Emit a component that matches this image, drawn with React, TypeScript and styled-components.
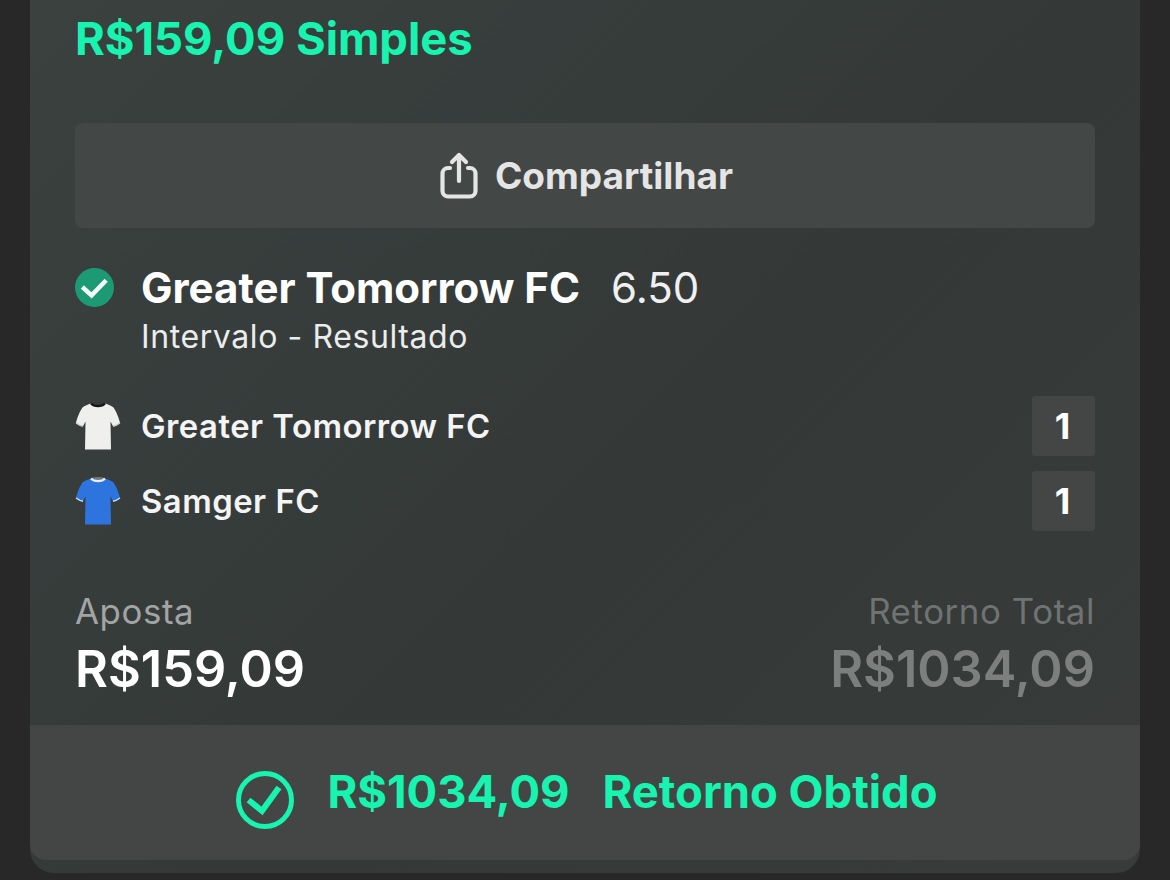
import styled, { createGlobalStyle } from 'styled-components';

const GlobalStyle = createGlobalStyle`
  html, body {
    margin: 0;
    padding: 0;
    height: 880px;
    overflow: hidden;
    background: #282828;
    font-family: Inter, 'Liberation Sans', sans-serif;
  }
`;

const teams = [
  { name: 'Greater Tomorrow FC', score: 1, body: '#efefee', collar: '#161616', neck: '#3a3a3a', trim: '#c9c9c9' },
  { name: 'Samger FC', score: 1, body: '#2d74de', collar: '#e6eef8', neck: '#6d7680', trim: '#cfe0f7' },
];

function Shirt({ body, collar, neck, trim }: { body: string; collar: string; neck: string; trim: string }) {
  return (
    <ShirtIcon viewBox="0 0 46 50" aria-hidden="true">
      <path d="M16 2 C19 0.5 27 0.5 30 2 L29 6 L17 6 Z" fill={neck} />
      <path
        d="M16 2.5 C19 6 27 6 30 2.5 C33 3.5 36.5 4.5 38.5 6.5 C41 10 44 17 45 22 C43 23.5 40.5 24.8 38 25.3 L35.5 20.5 L36 48.5 L10 48.5 L10.5 20.5 L8 25.3 C5.5 24.8 3 23.5 1 22 C2 17 5 10 7.5 6.5 C9.5 4.5 13 3.5 16 2.5 Z"
        fill={body}
      />
      <path d="M16 2.5 C19 6 27 6 30 2.5" fill="none" stroke={collar} strokeWidth="2.2" />
      <path d="M1 22 C3 23.5 5.5 24.8 8 25.3 M45 22 C43 23.5 40.5 24.8 38 25.3" fill="none" stroke={trim} strokeWidth="1.4" />
    </ShirtIcon>
  );
}

export default function App() {
  return (
    <>
      <GlobalStyle />
      <Page>
        <Card>
          <Content>
            <Headline>R$159,09 Simples</Headline>
            <ShareButton>
              <svg width="38" height="47" viewBox="0 0 38 47" fill="none" stroke="#e4e5e4" strokeWidth="4.2" strokeLinecap="round" strokeLinejoin="round" aria-hidden="true">
                <path d="M10 16H8a5.500 5.500 0 0 0-5.500 5.500v17.500a5.500 5.500 0 0 0 5.500 5.500h22a5.500 5.500 0 0 0 5.500-5.500V21.500a5.500 5.500 0 0 0-5.500-5.500h-2" />
                <path d="M19 29V3M12 10l7-7 7 7" />
              </svg>
              Compartilhar
            </ShareButton>

            <Selection>
              <CheckBadge viewBox="0 0 40 40" aria-hidden="true">
                <circle cx="20" cy="20" r="20" fill="#1c9a73" />
                <path d="M7.500 19.500 17 28 32 12.500" fill="none" stroke="#f4f7f6" strokeWidth="4.600" />
              </CheckBadge>
              <SelectionText>
                <SelectionTitle>
                  Greater Tomorrow FC <Odds>6.50</Odds>
                </SelectionTitle>
                <Market>Intervalo - Resultado</Market>
              </SelectionText>
            </Selection>

            <Teams>
              {teams.map((team) => (
                <TeamRow key={team.name}>
                  <Shirt body={team.body} collar={team.collar} neck={team.neck} trim={team.trim} />
                  <TeamName>{team.name}</TeamName>
                  <Score>{team.score}</Score>
                </TeamRow>
              ))}
            </Teams>

            <Totals>
              <TotalBlock>
                <TotalLabel>Aposta</TotalLabel>
                <TotalValue>R$159,09</TotalValue>
              </TotalBlock>
              <TotalBlock $right>
                <TotalLabel $muted>Retorno Total</TotalLabel>
                <TotalValue $muted>R$1034,09</TotalValue>
              </TotalBlock>
            </Totals>
          </Content>

          <Footer>
            <FooterCheck viewBox="0 0 58 58" fill="none" stroke="#17f4b0" aria-hidden="true">
              <circle cx="29" cy="29" r="26.500" strokeWidth="5" />
              <path d="M12.500 29 26 40 43 16.500" strokeWidth="6" />
            </FooterCheck>
            <FooterText>R$1034,09</FooterText>
            <FooterText>Retorno Obtido</FooterText>
          </Footer>
        </Card>
      </Page>
    </>
  );
}

const Page = styled.div`
  height: 880px;
  padding: 0 30px;
  box-sizing: border-box;
  background: #282828;
`;

const Card = styled.div`
  display: flex;
  flex-direction: column;
  height: 873px;
  padding-bottom: 13px;
  box-sizing: border-box;
  border-radius: 0 0 24px 24px;
  background: linear-gradient(135deg, #3a413f 0%, #343938 55%, #383b3a 100%);
`;

const Content = styled.div`
  display: flex;
  flex-direction: column;
  flex: 1;
  padding: 0 45px;
`;

const Headline = styled.div`
  margin-top: 15px;
  color: #17f4b0;
  font-size: 45.400px;
  line-height: 48px;
  font-weight: 700;
`;

const ShareButton = styled.div`
  display: flex;
  align-items: center;
  justify-content: center;
  gap: 17px;
  height: 105px;
  margin-top: 60px;
  padding-left: 3px;
  border-radius: 8px;
  background: #434846;
  color: #e4e5e4;
  font-size: 37px;
  font-weight: 700;
`;

const Selection = styled.div`
  display: flex;
  gap: 27px;
  margin-top: 40px;
`;

const CheckBadge = styled.svg`
  width: 39px;
  height: 39px;
  flex: none;
`;

const SelectionText = styled.div`
  display: flex;
  flex-direction: column;
`;

const SelectionTitle = styled.div`
  color: #fff;
  font-size: 42px;
  line-height: 40px;
  font-weight: 700;
`;

const Odds = styled.span`
  margin-left: 21px;
  color: #f0f0f0;
  font-weight: 400;
`;

const Market = styled.div`
  margin-top: 10px;
  color: #ebecec;
  font-size: 32px;
  line-height: 38px;
  letter-spacing: 0.6px;
`;

const Teams = styled.div`
  display: flex;
  flex-direction: column;
  gap: 15px;
  margin-top: 40px;
`;

const TeamRow = styled.div`
  display: flex;
  align-items: center;
  height: 60px;
`;

const ShirtIcon = styled.svg`
  width: 46px;
  height: 50px;
  flex: none;
  margin-right: 21px;
`;

const TeamName = styled.div`
  flex: 1;
  margin-left: -1px;
  margin-top: -1px;
  color: #f4f4f4;
  font-size: 32.800px;
  font-weight: 600;
  letter-spacing: 0.5px;
`;

const Score = styled.div`
  display: flex;
  align-items: center;
  justify-content: center;
  width: 63px;
  height: 60px;
  padding-right: 2px;
  box-sizing: border-box;
  border-radius: 3px;
  background: #434645;
  color: #fff;
  font-size: 36px;
  font-weight: 700;
`;

const Totals = styled.div`
  display: flex;
  justify-content: space-between;
  margin-top: 60px;
`;

const TotalBlock = styled.div<{ $right?: boolean }>`
  display: flex;
  flex-direction: column;
  align-items: ${(p) => (p.$right ? 'flex-end' : 'flex-start')};
`;

const TotalLabel = styled.div<{ $muted?: boolean }>`
  color: ${(p) => (p.$muted ? '#6f7372' : '#a2a5a4')};
  font-size: 34.800px;
  line-height: 40px;
  letter-spacing: 0.6px;
`;

const TotalValue = styled.div<{ $muted?: boolean }>`
  margin-top: 10px;
  color: ${(p) => (p.$muted ? '#7d7f7e' : '#fff')};
  font-size: 50.500px;
  line-height: 56px;
  font-weight: 600;
`;

const Footer = styled.div`
  display: flex;
  align-items: center;
  justify-content: center;
  gap: 33px;
  height: 135px;
  padding-left: 4px;
  border-radius: 0 0 16px 16px;
  background: #434645;
`;

const FooterCheck = styled.svg`
  width: 58px;
  height: 58px;
  flex: none;
  margin-top: 15px;
`;

const FooterText = styled.div`
  margin-top: -2px;
  color: #17f4b0;
  font-size: 45.400px;
  font-weight: 700;
`;
